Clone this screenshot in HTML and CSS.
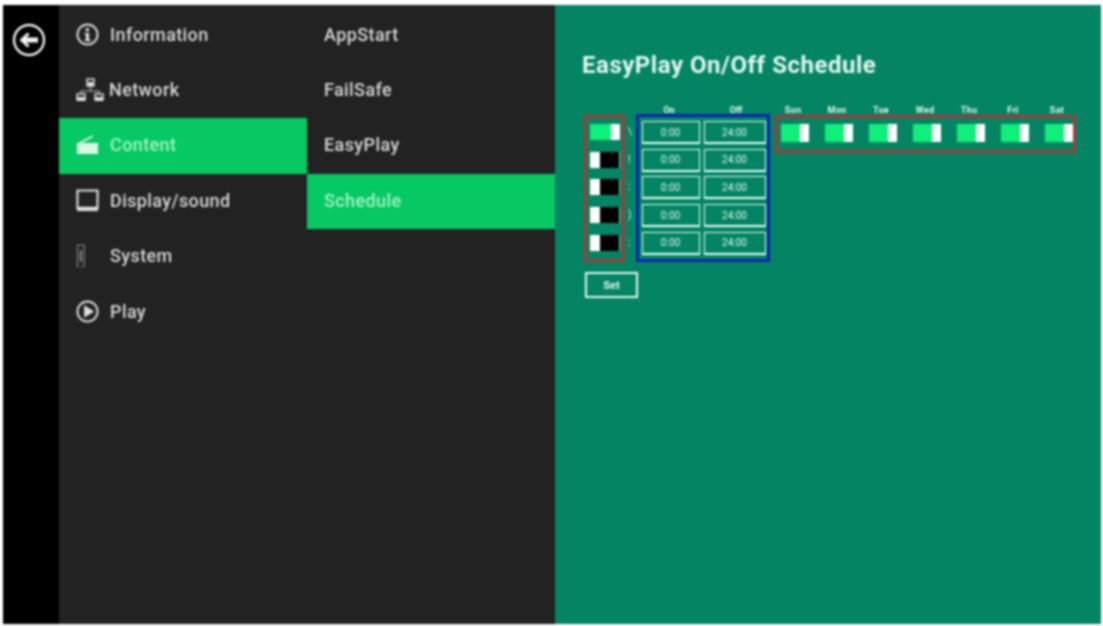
FILE: index.html
```html
<!DOCTYPE html>
<html lang="en">
<head>
<meta charset="utf-8">
<title>EasyPlay On/Off Schedule</title>
<link rel="stylesheet" href="styles.css">
</head>
<body>
<div class="app">
  <aside class="rail">
    <svg class="back" viewBox="0 0 34 34" aria-label="Back">
      <circle cx="17" cy="17" r="15" fill="none" stroke="#eee" stroke-width="2.400"/>
      <path d="M7.500 17 15.500 9.500 17.500 11.500 14.500 14.500H26V19.500H14.500L17.500 22.500 15.500 24.500Z" fill="#f4f4f4"/>
    </svg>
  </aside>
  <nav class="menu">
    <div class="item">
      <svg class="icon" viewBox="0 0 24 24"><circle cx="12" cy="12" r="10.500" fill="none" stroke="#ddd" stroke-width="2"/><path d="M10 5.500h3.600v3.200H10zM9 10.500h4.600v7H15.500v1.500H9v-1.500h1.300v-5.500H9z" fill="#ddd"/></svg>
      <span>Information</span>
    </div>
    <div class="item tight">
      <svg class="icon" viewBox="0 0 30 24"><path d="M11 1h7v7h-7zM1 16h8v6H1zM19 16h8v6h-8z" fill="none" stroke="#ddd" stroke-width="1.400"/><path d="M1 19h8v4H1zM19 19h8v4h-8zM12 4h5v4h-5z" fill="#ddd"/><path d="M14.500 8v5M5 16v-3h18v3" fill="none" stroke="#bbb" stroke-width="1.200"/></svg>
      <span>Network</span>
    </div>
    <div class="item active">
      <svg class="icon" viewBox="0 0 24 24"><path d="M1 11 17 2.500l.8 1.600L6 10.500h17V22H1z" fill="#d9f7e4"/></svg>
      <span>Content</span>
    </div>
    <div class="item">
      <svg class="icon" viewBox="0 0 24 24"><path d="M1.500 1.500h21v18h-21z" fill="none" stroke="#ddd" stroke-width="2.200"/><path d="M1 19h22v4H1z" fill="#ddd"/></svg>
      <span>Display/sound</span>
    </div>
    <div class="item">
      <svg class="icon" viewBox="0 0 24 24"><path d="M1.500 1h7v23h-7z" fill="none" stroke="#888" stroke-width="1.200"/><path d="M5 6.500v12" stroke="#aaa" stroke-width="1.600"/></svg>
      <span>System</span>
    </div>
    <div class="item">
      <svg class="icon" viewBox="0 0 24 24"><circle cx="12" cy="12" r="10.500" fill="none" stroke="#ddd" stroke-width="2"/><path d="M8.500 5.500 19 12 8.500 18.500Z" fill="#ddd"/></svg>
      <span>Play</span>
    </div>
  </nav>
  <nav class="menu sub">
    <div class="item">AppStart</div>
    <div class="item">FailSafe</div>
    <div class="item">EasyPlay</div>
    <div class="item active">Schedule</div>
  </nav>
  <main class="panel">
    <h1>EasyPlay On/Off Schedule</h1>
    <div class="schedule">
      <div>
        <div class="switches">
          <div class="row"><span class="toggle on"></span><span>\</span></div>
          <div class="row"><span class="toggle"></span><span>!</span></div>
          <div class="row"><span class="toggle"></span><span>:</span></div>
          <div class="row"><span class="toggle"></span><span>)</span></div>
          <div class="row"><span class="toggle"></span><span>:</span></div>
        </div>
        <button class="set" type="button">Set</button>
      </div>
      <div class="times-col">
        <div class="heads"><span>On</span><span>Off</span></div>
        <div class="times">
          <div class="row"><span class="cell">0:00</span><span class="cell wide">24:00</span></div>
          <div class="row"><span class="cell">0:00</span><span class="cell wide">24:00</span></div>
          <div class="row"><span class="cell">0:00</span><span class="cell wide">24:00</span></div>
          <div class="row"><span class="cell">0:00</span><span class="cell wide">24:00</span></div>
          <div class="row"><span class="cell">0:00</span><span class="cell wide">24:00</span></div>
        </div>
      </div>
      <div class="days-col">
        <div class="day-heads"><span>Sun</span><span>Mon</span><span>Tue</span><span>Wed</span><span>Thu</span><span>Fri</span><span>Sat</span></div>
        <div class="days">
          <span class="toggle on"></span><span class="toggle on"></span><span class="toggle on"></span><span class="toggle on"></span><span class="toggle on"></span><span class="toggle on"></span><span class="toggle on"></span>
        </div>
      </div>
    </div>
  </main>
</div>
</body>
</html>
```
FILE: styles.css
```css
* { box-sizing: border-box; }
html, body { margin: 0; height: 100%; background: #fff; }
body { overflow: hidden; }
.app {
  width: 1103px;
  height: 626px;
  padding: 5px 2px 2px 3px;
  display: grid;
  grid-template-columns: 56px 248px 248px 546px;
  font-family: Roboto, "Liberation Sans", sans-serif;
  filter: blur(0.8px);
}
.rail { background: #000; padding: 18px 0 0 9px; }
.back { display: block; width: 34px; height: 34px; }
.menu { background: #222; padding-top: 2.500px; }
.item {
  height: 55.400px;
  display: flex;
  align-items: center;
  gap: 11px;
  padding: 0 0 2px 17px;
  font-size: 18px;
  font-weight: 500;
  letter-spacing: 0.4px;
  color: #d8d8d8;
}
.item.tight { gap: 3px; }
.item.active { background: #06c964; color: #a5f2c4; }
.icon { width: 23px; height: 23px; flex: none; }
.item.tight .icon { width: 30px; height: 24px; }
.sub .item { gap: 0; }
.panel { background: #038563; padding: 44px 0 0 27px; color: #e6f5ee; }
h1 {
  margin: 0;
  font-size: 24px;
  line-height: 32px;
  font-weight: 700;
  letter-spacing: 0.52px;
  color: #e2f7ee;
}
.schedule { display: flex; align-items: flex-start; margin-top: 15px; }
.switches {
  margin: 19px 0 0 2px;
  width: 41px;
  height: 147px;
  border: 3px solid #a33b3b;
  padding: 6px 0 0 3px;
}
.switches .row {
  display: flex;
  gap: 8px;
  height: 27.700px;
  width: 50px;
  font-size: 10px;
  line-height: 16px;
  color: #cfeee0;
}
.toggle {
  display: block;
  flex: none;
  width: 30px;
  height: 16px;
  background: #000;
  border-left: 10px solid #fff;
  border-right: 1.500px solid #8fc4ae;
}
.toggle.on {
  background: #0ff07a;
  border-left: 0;
  border-right: 9px solid #fff;
}
.set {
  display: block;
  margin: 10px 0 0 3px;
  width: 53px;
  height: 26px;
  padding: 0;
  background: transparent;
  border: 2px solid #e4f8ef;
  color: #e6f5ee;
  font: 700 11px Roboto, "Liberation Sans", sans-serif;
}
.times-col { margin-left: -2px; width: 134px; }
.heads {
  display: flex;
  height: 18px;
  padding: 9px 0 0 2px;
  font-size: 9px;
  font-weight: 700;
  line-height: 11px;
}
.heads span { width: 62px; text-align: center; }
.heads span + span { width: 62px; margin-left: 5px; }
.times {
  height: 148px;
  border: 3.500px solid #0a24b4;
  padding: 4px 0 0 2.500px;
}
.times .row { display: flex; gap: 4px; height: 27.700px; }
.cell {
  width: 58px;
  height: 23px;
  display: flex;
  align-items: center;
  justify-content: center;
  border: 1.500px solid #eafff5;
  border-bottom-width: 2px;
  font-size: 10px;
  color: #e0f5eb;
}
.cell.wide { width: 62px; }
.days-col { margin-left: 5px; width: 301px; }
.day-heads {
  display: flex;
  height: 19px;
  margin-left: -4px;
  padding: 9px 0 0;
  font-size: 9px;
  font-weight: 700;
  line-height: 11px;
}
.day-heads span { width: 44px; flex: none; text-align: center; letter-spacing: 0.3px; }
.days {
  height: 38px;
  border: 3px solid #a33b3b;
  padding: 6px 0 0 3px;
  display: flex;
  gap: 16px;
}
.days .toggle { width: 28px; height: 18px; flex: none; border-left: 0; }
```
